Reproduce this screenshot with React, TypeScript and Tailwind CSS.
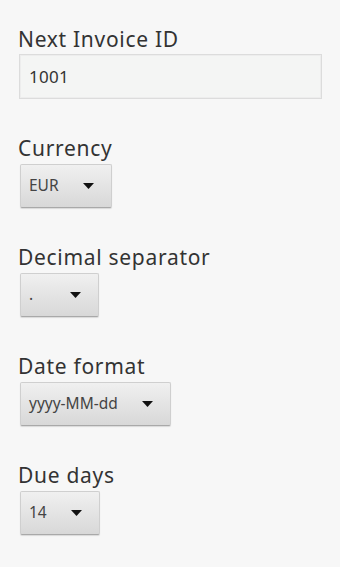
import React from 'react';

const font = { fontFamily: '"Noto Sans", "Open Sans", sans-serif' };

const Label: React.FC<{ children: React.ReactNode }> = ({ children }) => (
  <div className="text-[21px] leading-[24px] tracking-[0.7px] text-[#333]">{children}</div>
);

const Spinner: React.FC<{ value: string }> = ({ value }) => (
  <div className="mt-[4px] flex h-[44px] min-w-[79px] self-start items-center rounded-[2px] border border-[#cfcfcf] border-b-[#a9a9a9] bg-gradient-to-b from-[#f0f0f0] to-[#d8d8d8] pl-[8px] pr-[17px] shadow-[0_1px_1px_rgba(0,0,0,0.12)]">
    <span className="flex-1 text-[15.5px] text-[#444]">{value}</span>
    <svg width="11" height="6" viewBox="0 0 11 6" className="ml-[24px]">
      <path d="M0 0 H11 L5.5 6 Z" fill="#111" />
    </svg>
  </div>
);

export default function App() {
  return (
    <div className="min-h-[567px] bg-[#f7f7f7] pl-[18px] pr-[18px] pt-[27px]" style={font}>
      <div className="flex flex-col gap-[37px]">
        <div className="flex flex-col">
          <Label>Next Invoice ID</Label>
          <div className="mt-[3px] ml-[1px] flex h-[45px] items-center border border-[#dcdcdc] bg-[#f4f5f4] pl-[9px] shadow-[inset_0_0_0_1px_#ededed]">
            <span className="text-[17px] tracking-[0.3px] text-[#333]">1001</span>
          </div>
        </div>
        <div className="flex flex-col">
          <Label>Currency</Label>
          <div className="ml-[2px] flex"><Spinner value="EUR" /></div>
        </div>
        <div className="flex flex-col">
          <Label>Decimal separator</Label>
          <div className="ml-[2px] flex"><Spinner value="." /></div>
        </div>
        <div className="flex flex-col">
          <Label>Date format</Label>
          <div className="ml-[2px] flex"><Spinner value="yyyy-MM-dd" /></div>
        </div>
        <div className="flex flex-col">
          <Label>Due days</Label>
          <div className="ml-[2px] flex"><Spinner value="14" /></div>
        </div>
      </div>
    </div>
  );
}
